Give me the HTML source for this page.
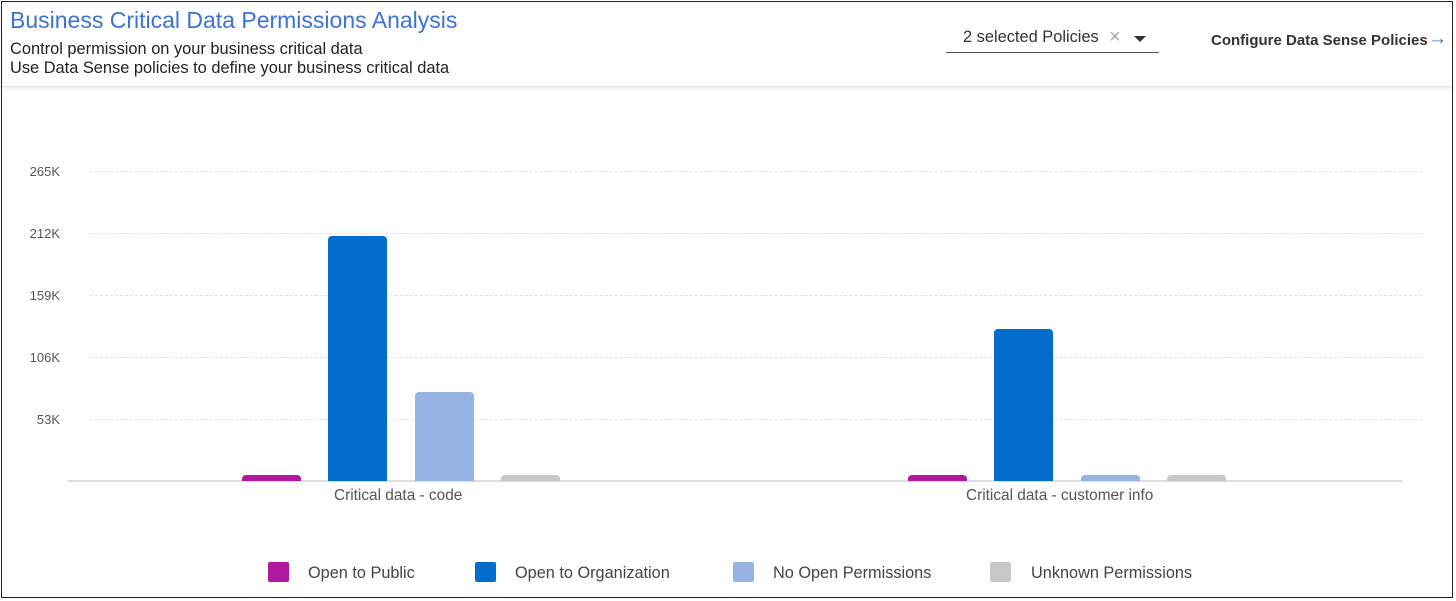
<!DOCTYPE html>
<html><head><style>
body{margin:0;width:1456px;height:601px;overflow:hidden;background:#fff;font-family:"Liberation Sans",sans-serif;position:relative}
.frame{position:absolute;left:1px;top:1px;width:1452px;height:597px;border:1px solid #222;box-sizing:border-box}
.hdr{position:absolute;left:2px;top:2px;width:1450px;height:84px;box-shadow:0 2px 3px rgba(0,0,0,.08);border-bottom:1px solid #e6e6e6}
.t{position:absolute;white-space:nowrap}
.g{position:absolute;left:90px;width:1332px;border-top:1px dashed #e2e2e2;height:0}
.y{position:absolute;width:60px;left:0;text-align:right;font-size:13px;color:#555}
.b{position:absolute;border-radius:4px 4px 0 0}
.sq{position:absolute;top:562px;width:21px;height:20px;border-radius:2px}
.lg{position:absolute;top:564px;font-size:16.3px;color:#444}
</style></head><body>
<div class="hdr"></div>
<div class="frame"></div>
<div class="t" style="left:10px;top:7px;font-size:23px;color:#3b73d8">Business Critical Data Permissions Analysis</div>
<div class="t" style="left:10px;top:40px;font-size:16.4px;color:#222;line-height:19px">Control permission on your business critical data<br>Use Data Sense policies to define your business critical data</div>
<div class="t" style="left:963px;top:28px;font-size:16.4px;color:#333">2 selected Policies</div>
<div class="t" style="left:1109px;top:26px;font-size:20px;color:#aaa">×</div>
<div style="position:absolute;left:1134px;top:36px;width:0;height:0;border-left:6px solid transparent;border-right:6px solid transparent;border-top:6px solid #333"></div>
<div style="position:absolute;left:946px;top:52px;width:213px;border-top:1px solid #555"></div>
<div class="t" style="left:1211px;top:32px;font-size:15px;color:#333;font-weight:bold">Configure Data Sense Policies</div>
<div class="t" style="left:1428px;top:28px;font-size:19px;color:#2f6fd6;font-weight:bold">→</div>

<div class="g" style="top:171px"></div><div class="g" style="top:233px"></div><div class="g" style="top:295px"></div><div class="g" style="top:357px"></div><div class="g" style="top:419px"></div>
<div class="y" style="top:164px">265K</div><div class="y" style="top:226px">212K</div><div class="y" style="top:288px">159K</div><div class="y" style="top:350px">106K</div><div class="y" style="top:412px">53K</div>
<div style="position:absolute;left:68px;top:480px;width:1335px;border-top:2px solid #ddd"></div>

<div class="b" style="left:242px;top:475px;width:59px;height:6px;background:#b0189e"></div>
<div class="b" style="left:328px;top:236px;width:59px;height:245px;background:#006dca"></div>
<div class="b" style="left:415px;top:392px;width:59px;height:89px;background:#97b3e5"></div>
<div class="b" style="left:501px;top:475px;width:59px;height:6px;background:#c8c8c8"></div>
<div class="b" style="left:908px;top:475px;width:59px;height:6px;background:#b0189e"></div>
<div class="b" style="left:994px;top:329px;width:59px;height:152px;background:#006dca"></div>
<div class="b" style="left:1081px;top:475px;width:59px;height:6px;background:#97b3e5"></div>
<div class="b" style="left:1167px;top:475px;width:59px;height:6px;background:#c8c8c8"></div>

<div class="t" style="left:334px;top:487px;font-size:15.4px;color:#555">Critical data - code</div>
<div class="t" style="left:966px;top:487px;font-size:15.4px;color:#555">Critical data - customer info</div>

<div class="sq" style="left:268px;background:#b0189e"></div><div class="lg" style="left:308px">Open to Public</div>
<div class="sq" style="left:475px;background:#006dca"></div><div class="lg" style="left:515px">Open to Organization</div>
<div class="sq" style="left:733px;background:#97b3e5"></div><div class="lg" style="left:773px">No Open Permissions</div>
<div class="sq" style="left:990px;background:#c8c8c8"></div><div class="lg" style="left:1031px">Unknown Permissions</div>
</body></html>
